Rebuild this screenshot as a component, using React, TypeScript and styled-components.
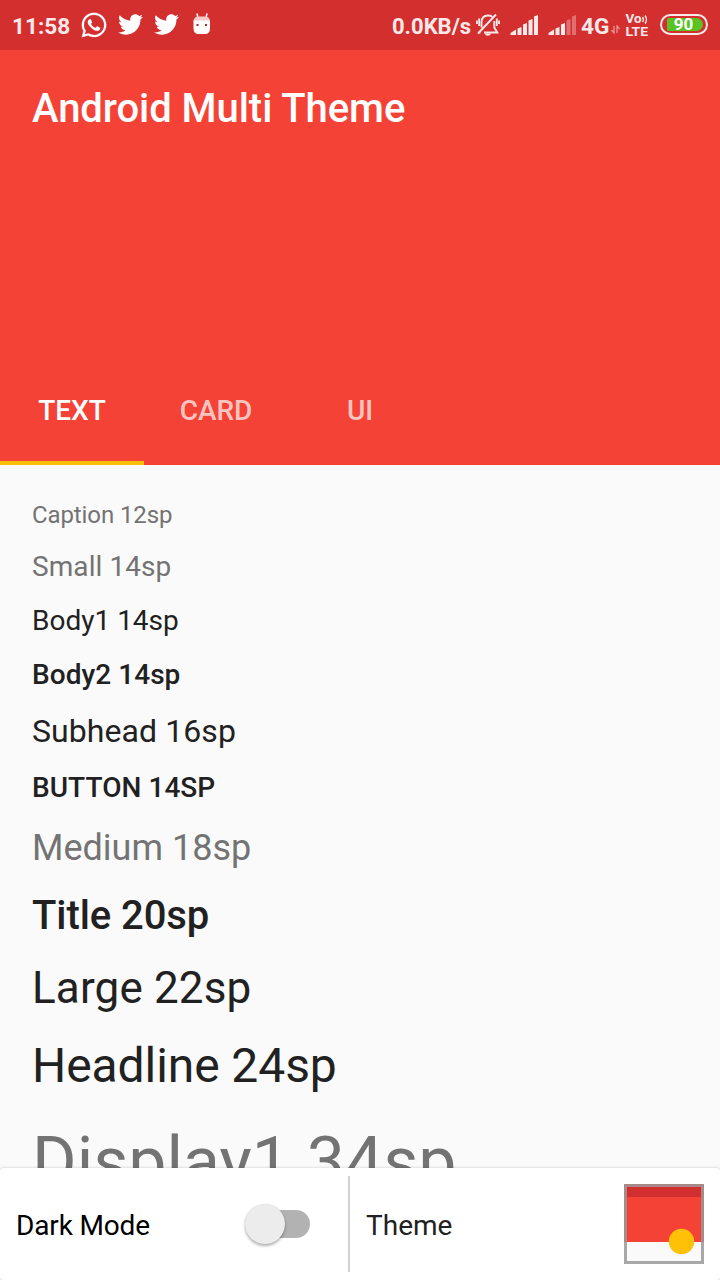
import React from 'react';
import styled, { createGlobalStyle } from 'styled-components';
import { FaTwitter, FaWhatsapp } from 'react-icons/fa';

const GlobalStyle = createGlobalStyle`
  * { box-sizing: border-box; }
  body { margin: 0; background: #fafafa; font-family: Roboto, "Liberation Sans", sans-serif; }
`;

const Screen = styled.div`
  display: flex;
  flex-direction: column;
  width: 720px;
  height: 1280px;
  overflow: hidden;
  background: #fafafa;
`;

const StatusBar = styled.div`
  display: flex;
  flex: none;
  align-items: flex-start;
  height: 50px;
  background: #d32f2f;
  color: #fff;
  & > svg { flex: none; display: block; }
`;

const StatusText = styled.span<{ $width: number; $left?: number; $size?: number }>`
  flex: none;
  width: ${(p) => p.$width}px;
  margin-left: ${(p) => p.$left ?? 0}px;
  padding-top: 2px;
  font-size: ${(p) => p.$size ?? 22.6}px;
  font-weight: 700;
  line-height: 50px;
  white-space: nowrap;
  color: #fbe9e9;
`;

const WhatsApp = styled(FaWhatsapp)`
  width: 28px;
  height: 28px;
  margin: 11px -1px 0 10px;
  stroke: #fff;
  stroke-width: 4px;
`;

const Twitter = styled(FaTwitter)`
  width: 25px;
  height: 25px;
  margin: 12px 0 0 11px;
`;

const Spacer = styled.div`
  flex: 1;
`;

const Battery = styled.div`
  display: flex;
  flex: none;
  width: 48px;
  height: 21px;
  margin: 14px 12px 0 11px;
  padding: 2px 3px 2px 5px;
  border: 2px solid #fbe9e9;
  border-radius: 11px;
`;

const BatteryLevel = styled.div`
  flex: 1;
  padding-right: 3px;
  border-radius: 2px 7px 7px 2px;
  background: #58c322;
  color: #fff;
  font-size: 17px;
  font-weight: 700;
  line-height: 13px;
  text-align: center;
`;

const Header = styled.header`
  display: flex;
  flex: none;
  flex-direction: column;
  justify-content: space-between;
  height: 415px;
  background: #f44336;
`;

const Title = styled.h1`
  margin: 35px 0 0 32px;
  color: #fff;
  font-size: 40px;
  font-weight: 500;
  letter-spacing: -0.05px;
  line-height: 48px;
`;

const Tabs = styled.nav`
  display: flex;
  height: 96px;
`;

const Tab = styled.div<{ $active?: boolean }>`
  width: 144px;
  height: 96px;
  padding-top: 24px;
  border-bottom: 4px solid ${(p) => (p.$active ? '#ffc107' : 'transparent')};
  color: ${(p) => (p.$active ? '#fff' : 'rgba(255, 255, 255, 0.7)')};
  font-size: 28px;
  font-weight: 500;
  line-height: 36px;
  text-align: center;
`;

const Samples = styled.main`
  display: flex;
  flex: 1;
  min-height: 0;
  flex-direction: column;
  padding: 33px 32px 0;
  overflow: hidden;
`;

const Sample = styled.div<{
  $size: number;
  $height: number;
  $after?: number;
  $tracking?: number;
  $muted?: boolean;
  $medium?: boolean;
}>`
  flex: none;
  height: ${(p) => p.$height}px;
  margin-bottom: ${(p) => p.$after ?? 16}px;
  color: ${(p) => (p.$muted ? '#737373' : '#212121')};
  font-size: ${(p) => p.$size}px;
  font-weight: ${(p) => (p.$medium ? 500 : 400)};
  letter-spacing: ${(p) => p.$tracking ?? 0}px;
  line-height: ${(p) => p.$height + p.$size * 0.1}px;
  white-space: nowrap;
`;

const BottomBar = styled.footer`
  display: flex;
  flex: none;
  align-items: center;
  position: relative;
  height: 112px;
  border-radius: 4px;
  background: #fff;
  box-shadow: 0 0 3px rgba(0, 0, 0, 0.2);
`;

const Setting = styled.div<{ $width: number }>`
  display: flex;
  align-items: center;
  justify-content: space-between;
  width: ${(p) => p.$width}px;
  height: 112px;
  padding: 0 16px;
`;

const SettingLabel = styled.span<{ $color: string; $tracking?: number }>`
  padding-top: 4px;
  color: ${(p) => p.$color};
  font-size: 28px;
  letter-spacing: ${(p) => p.$tracking ?? 0}px;
  line-height: 36px;
`;

const Track = styled.div`
  display: flex;
  align-items: center;
  width: 62px;
  height: 28px;
  margin-right: 22px;
  border-radius: 14px;
  background: #b2b2b2;
`;

const Thumb = styled.div`
  flex: none;
  width: 40px;
  height: 40px;
  margin-left: -3px;
  border-radius: 50%;
  background: #ececec;
  box-shadow: 0 2px 3px rgba(0, 0, 0, 0.3), 0 0 1px rgba(0, 0, 0, 0.15);
`;

const Divider = styled.div`
  width: 2px;
  height: 96px;
  background: #d0d0d0;
`;

const SwatchFrame = styled.svg`
  display: block;
  width: 80px;
  height: 80px;
`;

const SignalIcon = styled.svg<{ $left: number }>`
  margin: 15px 0 0 ${(p) => p.$left}px;
  fill: #fbe9e9;
`;

const HeadIcon = styled.svg`
  margin: 12px 0 0 13px;
`;

const BellIcon = styled.svg`
  margin: 13px 0 0 5px;
  fill: none;
  stroke: #fbe9e9;
  stroke-width: 1.9px;
`;

const ArrowsIcon = styled.svg`
  margin: 25px 0 0 3px;
  fill: none;
  stroke: #fbe9e9;
  opacity: 0.55;
`;

const VolteIcon = styled.svg`
  margin: 13px 0 0 5px;
  fill: #fbe9e9;
  font-family: Roboto, sans-serif;
  font-weight: 700;
`;

function Signal({ left, strong }: { left: number; strong: number }) {
  return (
    <SignalIcon $left={left} width="28" height="20" viewBox="0 0 28 20">
      <path d="M0.500 20v-2l5.500-3.500v5.500z" opacity={strong > 0 ? 1 : 0.35} />
      {[
        [7.5, 8], [13, 12], [18.5, 16], [24, 20],
      ].map(([x, h], i) => (
        <path key={x} d={`M${x} 20v-${h - 1.5}l4-1.500v${h}z`} opacity={strong > i + 1 ? 1 : 0.35} />
      ))}
    </SignalIcon>
  );
}

function AndroidHead() {
  return (
    <HeadIcon width="20" height="24" viewBox="0 0 20 24">
      <path d="M5 1.500l.8 3.500M15 1.500l-.8 3.500" stroke="#fff" strokeWidth="1.5" />
      <path d="M1.500 9Q2 4.500 6.500 4.500h6.500q4.500 0 5 4.500z" fill="#f9caca" />
      <path d="M1.500 8.500h16.500v7.500q0 6-5 6h-6.500q-5 0-5-6z" fill="#fff" />
      <path d="M4.500 12h2v2h-2zM13 12h2v2h-2z" fill="#a52b2b" />
    </HeadIcon>
  );
}

function MutedBell() {
  return (
    <BellIcon width="24" height="24" viewBox="0 0 24 24">
      <path d="M5.500 14.500V9.500C5.500 5 8 2.500 12 2.500q2.500 0 4.300 1.300M18.300 8v6.500l3 5H8M2.500 19.500h2M20 1.500L2 20.500" />
      <path d="M8.500 20.500h6.500q-.8 2.200-3.200 2.200t-3.300-2.200z" fill="#fbe9e9" stroke="none" />
      <path d="M3.200 5.500v7.500M20.800 5.500v7.500M.9 7.500v3.500M23.100 7.500v3.500" />
    </BellIcon>
  );
}

function DataArrows() {
  return (
    <ArrowsIcon width="9" height="9" viewBox="0 0 9 9">
      <path d="M3 1v7L.5 5M6 8V1l2.500 3" strokeWidth="1.300" />
    </ArrowsIcon>
  );
}

function Volte() {
  return (
    <VolteIcon width="24" height="24" viewBox="0 0 24 24">
      <text x="0.500" y="10" fontSize="12" textLength="16" lengthAdjust="spacingAndGlyphs">Vo</text>
      <path d="M17.500 4q1.800 2.500 0 5M20 2.500q3 4 0 8" fill="none" stroke="#fbe9e9" strokeWidth="1.400" />
      <text x="0.500" y="22.500" fontSize="12.500" textLength="22.500" lengthAdjust="spacingAndGlyphs">LTE</text>
    </VolteIcon>
  );
}

function ThemeSwatch() {
  return (
    <SwatchFrame viewBox="0 0 80 80">
      <path fill="#d32f2f" d="M0 0h80v13H0z" />
      <path fill="#f44336" d="M0 13h80v45H0z" />
      <path fill="#fafafa" d="M0 58h80v22H0z" />
      <path fill="#a88a88" d="M0 0h80v58h-3V3H3v55H0z" />
      <path fill="#a8a8a8" d="M0 58h3v19h74V58h3v22H0z" />
      <circle cx="57.500" cy="57.500" r="12.700" fill="#ffc107" />
    </SwatchFrame>
  );
}

const samples = [
  { text: 'Caption 12sp', size: 24, height: 33, muted: true, tracking: -0.1 },
  { text: 'Small 14sp', size: 28, height: 38, muted: true, tracking: 0.08 },
  { text: 'Body1 14sp', size: 28, height: 38 },
  { text: 'Body2 14sp', size: 28, height: 38, medium: true, after: 15, tracking: 0.05 },
  { text: 'Subhead 16sp', size: 32, height: 43, after: 17, tracking: 0.08 },
  { text: 'BUTTON 14SP', size: 28, height: 38, medium: true, after: 17, tracking: 0.05 },
  { text: 'Medium 18sp', size: 36, height: 48, muted: true },
  { text: 'Title 20sp', size: 40, height: 54, medium: true, tracking: -0.08 },
  { text: 'Large 22sp', size: 44, height: 59, tracking: 0.15 },
  { text: 'Headline 24sp', size: 48, height: 64, after: 18, tracking: -0.08 },
  { text: 'Display1 34sp', size: 68, height: 91, muted: true },
];

export default function App() {
  return (
    <Screen>
      <GlobalStyle />
      <StatusBar>
        <StatusText $width={58} $left={12}>11:58</StatusText>
        <WhatsApp />
        <Twitter />
        <Twitter />
        <AndroidHead />
        <Spacer />
        <StatusText $width={79} $size={22}>0.0KB/s</StatusText>
        <MutedBell />
        <Signal left={10} strong={5} />
        <Signal left={10} strong={3} />
        <StatusText $width={27} $left={5}>4G</StatusText>
        <DataArrows />
        <Volte />
        <Battery>
          <BatteryLevel>90</BatteryLevel>
        </Battery>
      </StatusBar>
      <Header>
        <Title>Android Multi Theme</Title>
        <Tabs>
          <Tab $active>TEXT</Tab>
          <Tab>CARD</Tab>
          <Tab>UI</Tab>
        </Tabs>
      </Header>
      <Samples>
        {samples.map((s) => (
          <Sample
            key={s.text}
            $size={s.size}
            $height={s.height}
            $after={s.after}
            $tracking={s.tracking}
            $muted={s.muted}
            $medium={s.medium}
          >
            {s.text}
          </Sample>
        ))}
      </Samples>
      <BottomBar>
        <Setting $width={348}>
          <SettingLabel $color="#000" $tracking={-0.15}>Dark Mode</SettingLabel>
          <Track>
            <Thumb />
          </Track>
        </Setting>
        <Divider />
        <Setting $width={370}>
          <SettingLabel $color="#212121">Theme</SettingLabel>
          <ThemeSwatch />
        </Setting>
      </BottomBar>
    </Screen>
  );
}
